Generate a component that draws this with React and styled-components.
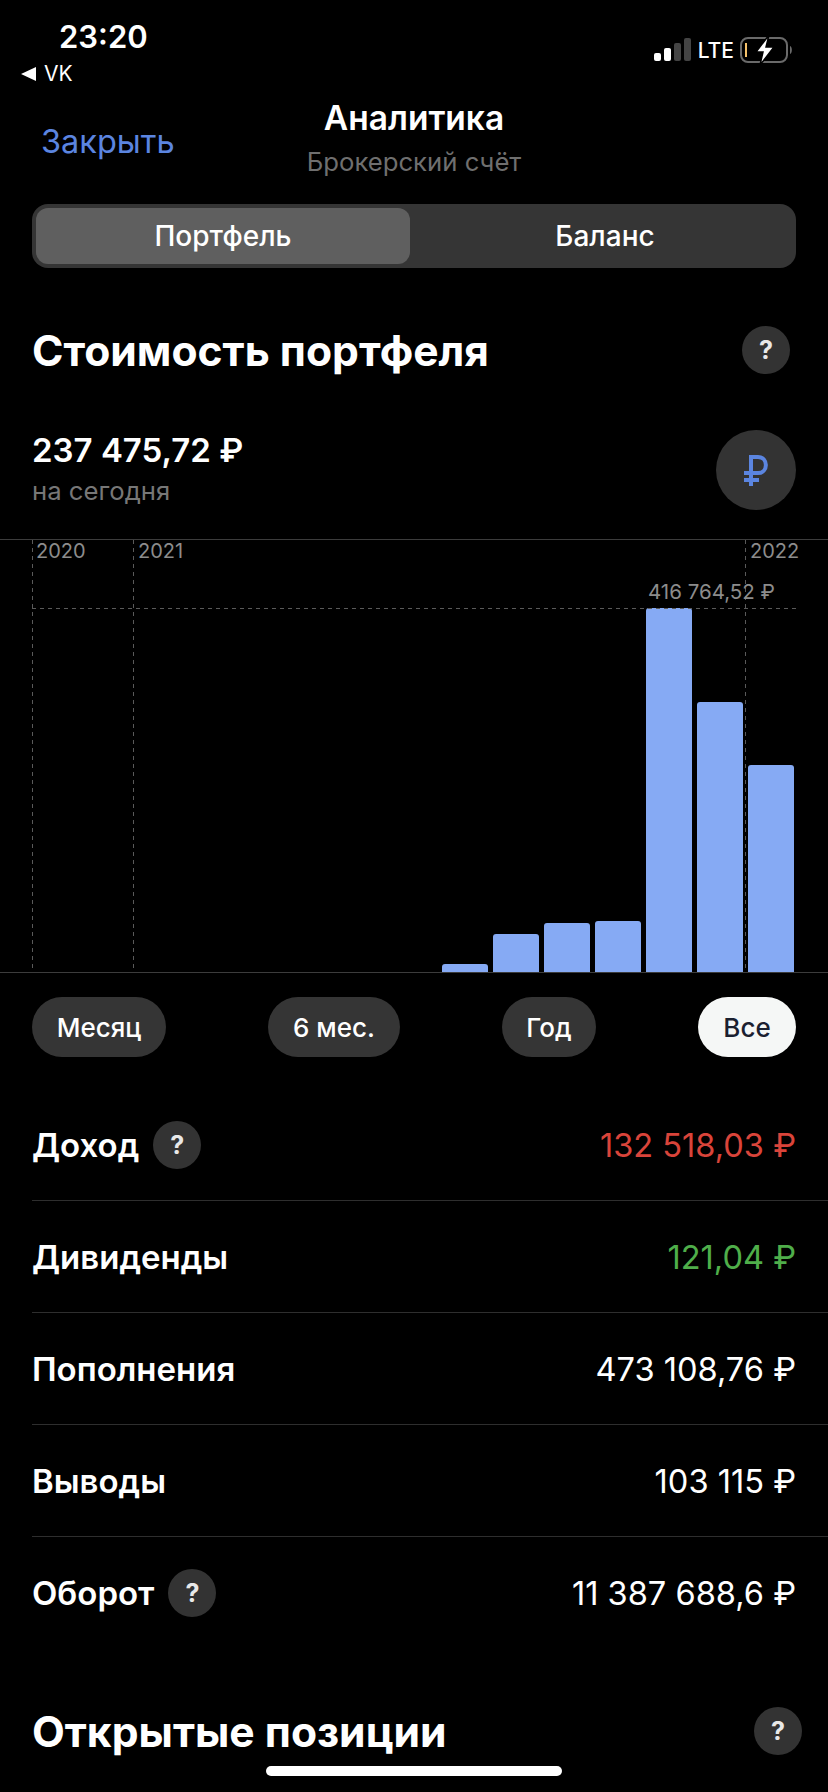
import styled, { createGlobalStyle } from "styled-components";

const GlobalStyle = createGlobalStyle`
  html, body {
    margin: 0;
    padding: 0;
    background: #000;
  }
  * {
    box-sizing: border-box;
  }
`;

const Screen = styled.div`
  position: relative;
  width: 828px;
  height: 1792px;
  overflow: hidden;
  background: #000;
  color: #fff;
  font-family: Inter, "Noto Sans", sans-serif;
`;

const StatusBar = styled.div`
  display: flex;
  justify-content: space-between;
  height: 92px;
  padding: 20px 34px 0 21px;
`;
const StatusLeft = styled.div`
  display: flex;
  flex-direction: column;
`;
const Time = styled.div`
  margin-left: 38px;
  font-size: 31px;
  line-height: 33px;
  font-weight: 600;
`;
const BackLink = styled.div`
  display: flex;
  align-items: center;
  gap: 8px;
  margin-top: 8px;
  font-size: 21px;
  line-height: 26px;
`;
const BackArrow = styled.span`
  width: 0;
  height: 0;
  border-top: 7px solid transparent;
  border-bottom: 7px solid transparent;
  border-right: 15px solid #fff;
`;
const StatusRight = styled.div`
  display: flex;
  align-items: center;
  gap: 6px;
  height: 60px;
`;
const Lte = styled.span`
  font-size: 21px;
  font-weight: 500;
`;

const Header = styled.header`
  display: grid;
  grid-template-columns: 1fr auto 1fr;
  align-items: center;
  height: 96px;
  padding: 0 41px;
`;
const CloseLink = styled.a`
  color: #5b85e0;
  font-size: 32.5px;
`;
const TitleBlock = styled.div`
  margin-bottom: 10px;
  text-align: center;
`;
const Title = styled.div`
  font-size: 33.5px;
  line-height: 52px;
  font-weight: 600;
`;
const Subtitle = styled.div`
  color: #6f6f6f;
  font-size: 25.7px;
  line-height: 36px;
`;

const Segments = styled.div`
  display: flex;
  height: 64px;
  margin: 16px 32px 0;
  padding: 4px;
  border-radius: 16px;
  background: #353535;
`;
const Segment = styled.div`
  display: flex;
  flex: 0 0 ${(props) => props.$width}px;
  align-items: center;
  justify-content: center;
  padding-left: ${(props) => (props.$active ? 0 : 8)}px;
  border-radius: 12px;
  background: ${(props) => (props.$active ? "#5f5f5f" : "transparent")};
  font-size: 28px;
  font-weight: 500;
`;

const SectionHead = styled.div`
  display: flex;
  align-items: center;
  justify-content: space-between;
  height: 48px;
  margin-top: ${(props) => props.$top}px;
  padding: 0 ${(props) => props.$right}px 0 32px;
`;
const SectionTitle = styled.h2`
  margin: 0;
  font-size: 42.6px;
  font-weight: 700;
`;
const Help = styled.span`
  display: flex;
  flex: none;
  align-items: center;
  justify-content: center;
  width: 48px;
  height: 48px;
  border-radius: 50%;
  background: #333;
  color: #e8e8e8;
  font-size: 25px;
  font-weight: 700;
`;

const Summary = styled.div`
  display: flex;
  align-items: center;
  justify-content: space-between;
  height: 80px;
  margin-top: 56px;
  padding: 0 32px;
`;
const SummaryText = styled.div`
  margin-bottom: 3px;
`;
const SummaryValue = styled.div`
  font-size: 33px;
  line-height: 42px;
  font-weight: 600;
`;
const SummaryNote = styled.div`
  margin-top: 3px;
  color: #777;
  font-size: 25.7px;
  line-height: 34px;
`;
const CurrencyButton = styled.span`
  display: flex;
  align-items: center;
  justify-content: center;
  width: 80px;
  height: 80px;
  border-radius: 50%;
  background: #333;
`;

const Chart = styled.div`
  position: relative;
  display: flex;
  align-items: flex-end;
  justify-content: flex-end;
  gap: 4.5px;
  height: 434px;
  margin-top: 29px;
  padding-right: 34px;
  border-top: 1px solid #3c3c3c;
  border-bottom: 1px solid #3c3c3c;
`;
const Bar = styled.div`
  width: 46.5px;
  border-radius: 3px 3px 0 0;
  background: #86aaf4;
`;
const YearLine = styled.div`
  position: absolute;
  top: 0;
  bottom: 0;
  left: ${(props) => props.$x}px;
  width: 1px;
  background: repeating-linear-gradient(to bottom, #5a5a5a 0 4px, transparent 4px 8px);
`;
const PeakLine = styled.div`
  position: absolute;
  top: 68px;
  left: 32px;
  width: 764px;
  height: 1px;
  background: repeating-linear-gradient(to right, #5a5a5a 0 4px, transparent 4px 8px);
`;
const YearLabel = styled.span`
  position: absolute;
  top: 0;
  left: ${(props) => props.$x}px;
  color: #8c8c8c;
  font-size: 20px;
  line-height: 22px;
`;
const PeakLabel = styled.span`
  position: absolute;
  top: 41px;
  left: 648px;
  color: #8c8c8c;
  font-size: 20.5px;
  line-height: 22px;
`;

const Periods = styled.div`
  display: flex;
  justify-content: space-between;
  margin-top: 24px;
  padding: 0 32px;
`;
const Period = styled.span`
  display: flex;
  align-items: center;
  justify-content: center;
  width: ${(props) => props.$width}px;
  height: 60px;
  border-radius: 30px;
  background: ${(props) => (props.$active ? "#f5f7f6" : "#353535")};
  color: ${(props) => (props.$active ? "#1a2030" : "#fff")};
  font-size: 26px;
  font-weight: 500;
`;

const Rows = styled.div`
  margin: 32px 0 0 32px;
`;
const Row = styled.div`
  display: flex;
  align-items: center;
  justify-content: space-between;
  height: 112px;
  padding-right: 32px;
  border-bottom: ${(props) => (props.$last ? "none" : "1px solid #2e2e2e")};
`;
const RowLabel = styled.div`
  display: flex;
  align-items: center;
  gap: 14px;
  font-size: 33px;
  font-weight: 600;
`;
const RowValue = styled.div`
  color: ${(props) => props.$color};
  font-size: 32.6px;
`;

const HomeBar = styled.div`
  position: absolute;
  left: 266px;
  bottom: 16px;
  width: 296px;
  height: 10px;
  border-radius: 5px;
  background: #fff;
`;

const SignalIcon = () => (
  <svg width="38" height="24" viewBox="0 0 38 24">
    <rect x="0" y="15" width="7" height="8" rx="2" fill="#fff" />
    <rect x="10" y="10" width="7" height="13" rx="2" fill="#fff" />
    <rect x="20" y="5" width="7" height="18" rx="2" fill="#444" />
    <rect x="30" y="0" width="7" height="23" rx="2" fill="#444" />
  </svg>
);

const BatteryIcon = () => (
  <svg width="54" height="30" viewBox="0 0 54 30">
    <rect x="1" y="3" width="46" height="24" rx="7" fill="none" stroke="#6a6a6a" strokeWidth="2" />
    <rect x="5" y="8" width="2" height="14" fill="#f5c26b" />
    <path d="M50 11 C52.5 12 52.5 18 50 19 Z" fill="#6a6a6a" />
    <path d="M29 0 L16 17 H23 L20 30 L34 12 H26 Z" fill="#fff" stroke="#000" strokeWidth="1.5" />
  </svg>
);

const RubleIcon = () => (
  <svg width="24" height="33" viewBox="0 0 24 33" fill="none" stroke="#5b85e0" strokeWidth="4">
    <path d="M7 32 V3 H14 C24.5 3 24.5 19 14 19 H0" />
    <path d="M0 26 H15" />
  </svg>
);

const bars = [8, 38, 49, 51, 364, 270, 207];
const periods = [
  { label: "Месяц", width: 134 },
  { label: "6 мес.", width: 132 },
  { label: "Год", width: 94 },
  { label: "Все", width: 98, active: true },
];
const rows = [
  { label: "Доход", value: "132 518,03 ₽", color: "#d9443a", help: true },
  { label: "Дивиденды", value: "121,04 ₽", color: "#4fae4a" },
  { label: "Пополнения", value: "473 108,76 ₽", color: "#fff" },
  { label: "Выводы", value: "103 115 ₽", color: "#fff" },
  { label: "Оборот", value: "11 387 688,6 ₽", color: "#fff", help: true },
];

const App = () => {
  return (
    <Screen>
      <GlobalStyle />
      <StatusBar>
        <StatusLeft>
          <Time>23:20</Time>
          <BackLink>
            <BackArrow />
            VK
          </BackLink>
        </StatusLeft>
        <StatusRight>
          <SignalIcon />
          <Lte>LTE</Lte>
          <BatteryIcon />
        </StatusRight>
      </StatusBar>

      <Header>
        <CloseLink>Закрыть</CloseLink>
        <TitleBlock>
          <Title>Аналитика</Title>
          <Subtitle>Брокерский счёт</Subtitle>
        </TitleBlock>
      </Header>

      <Segments>
        <Segment $active $width={374}>
          Портфель
        </Segment>
        <Segment $width={382}>Баланс</Segment>
      </Segments>

      <SectionHead $top={58} $right={38}>
        <SectionTitle>Стоимость портфеля</SectionTitle>
        <Help>?</Help>
      </SectionHead>

      <Summary>
        <SummaryText>
          <SummaryValue>237 475,72 ₽</SummaryValue>
          <SummaryNote>на сегодня</SummaryNote>
        </SummaryText>
        <CurrencyButton>
          <RubleIcon />
        </CurrencyButton>
      </Summary>

      <Chart>
        {bars.map((height) => (
          <Bar key={height} style={{ height }} />
        ))}
        <YearLine $x={32} />
        <YearLine $x={133} />
        <YearLine $x={745} />
        <PeakLine />
        <YearLabel $x={36}>2020</YearLabel>
        <YearLabel $x={138}>2021</YearLabel>
        <YearLabel $x={750}>2022</YearLabel>
        <PeakLabel>416 764,52 ₽</PeakLabel>
      </Chart>

      <Periods>
        {periods.map((period) => (
          <Period key={period.label} $width={period.width} $active={period.active}>
            {period.label}
          </Period>
        ))}
      </Periods>

      <Rows>
        {rows.map((row, index) => (
          <Row key={row.label} $last={index === rows.length - 1}>
            <RowLabel>
              {row.label}
              {row.help && <Help>?</Help>}
            </RowLabel>
            <RowValue $color={row.color}>{row.value}</RowValue>
          </Row>
        ))}
      </Rows>

      <SectionHead $top={58} $right={26}>
        <SectionTitle>Открытые позиции</SectionTitle>
        <Help>?</Help>
      </SectionHead>

      <HomeBar />
    </Screen>
  );
};

export default App;
